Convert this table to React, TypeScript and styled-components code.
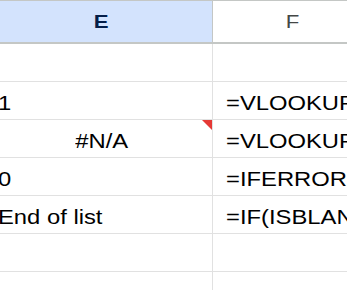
import React from "react";
import styled, { createGlobalStyle } from "styled-components";

const GlobalStyle = createGlobalStyle`
	html, body {
		margin: 0;
		padding: 0;
		background: #ffffff;
		overflow: hidden;
	}
`;

const Sheet = styled.div`
	display: grid;
	grid-template-columns: 222px 160px;
	margin-left: -9px;
	font-family: "Liberation Sans", Arial, sans-serif;
	font-size: 19.5px;
	color: #000000;
`;

const HeaderCell = styled.div<{ $selected?: boolean }>`
	box-sizing: border-box;
	height: 44px;
	display: flex;
	align-items: center;
	justify-content: center;
	border-top: 1px solid #c4c7c5;
	border-bottom: 2px solid #c4c7c5;
	border-right: 1px solid #c4c7c5;
	background: ${(p) => (p.$selected ? "#d3e3fd" : "#ffffff")};
	color: ${(p) => (p.$selected ? "#041e49" : "#444746")};
	font-weight: ${(p) => (p.$selected ? "bold" : "normal")};
	font-size: 18.5px;
`;

const Cell = styled.div<{ $align?: "left" | "center"; $wide?: boolean }>`
	position: relative;
	box-sizing: border-box;
	height: 38px;
	display: flex;
	align-items: flex-end;
	justify-content: ${(p) => (p.$align === "center" ? "center" : "flex-start")};
	padding: 0 0 6px ${(p) => (p.$align === "center" ? "0" : p.$wide ? "13px" : "7px")};
	border-bottom: 1px solid #e1e1e1;
	border-right: 1px solid #e1e1e1;
`;

const Text = styled.span<{ $align?: "left" | "center" }>`
	display: inline-block;
	line-height: 20px;
	white-space: nowrap;
	transform: scaleX(1.22);
	transform-origin: ${(p) => (p.$align === "center" ? "center" : "left")} bottom;
`;

const HeaderText = styled.span`
	display: inline-block;
	line-height: 19px;
	transform: scaleX(1.2);
`;

const ErrorMark = styled.div`
	position: absolute;
	top: 0;
	right: 0;
	width: 0;
	height: 0;
	border-top: 10px solid #e53935;
	border-left: 10px solid transparent;
`;

type Row = { e: string; f: string; align?: "left" | "center"; error?: boolean };

const rows: Row[] = [
	{ e: "", f: "" },
	{ e: "1", f: "=VLOOKUP" },
	{ e: "#N/A", f: "=VLOOKUP", align: "center", error: true },
	{ e: "0", f: "=IFERROR" },
	{ e: "End of list", f: "=IF(ISBLANK" },
	{ e: "", f: "" },
	{ e: "", f: "" },
];

const App = () => {
	return (
		<>
			<GlobalStyle />
			<Sheet>
				<HeaderCell $selected>
					<HeaderText>E</HeaderText>
				</HeaderCell>
				<HeaderCell>
					<HeaderText>F</HeaderText>
				</HeaderCell>
				{rows.map((row, idx) => (
					<React.Fragment key={idx}>
						<Cell $align={row.align}>
							{row.e && <Text $align={row.align}>{row.e}</Text>}
							{row.error && <ErrorMark />}
						</Cell>
						<Cell $wide>{row.f && <Text>{row.f}</Text>}</Cell>
					</React.Fragment>
				))}
			</Sheet>
		</>
	);
};

export default App;
